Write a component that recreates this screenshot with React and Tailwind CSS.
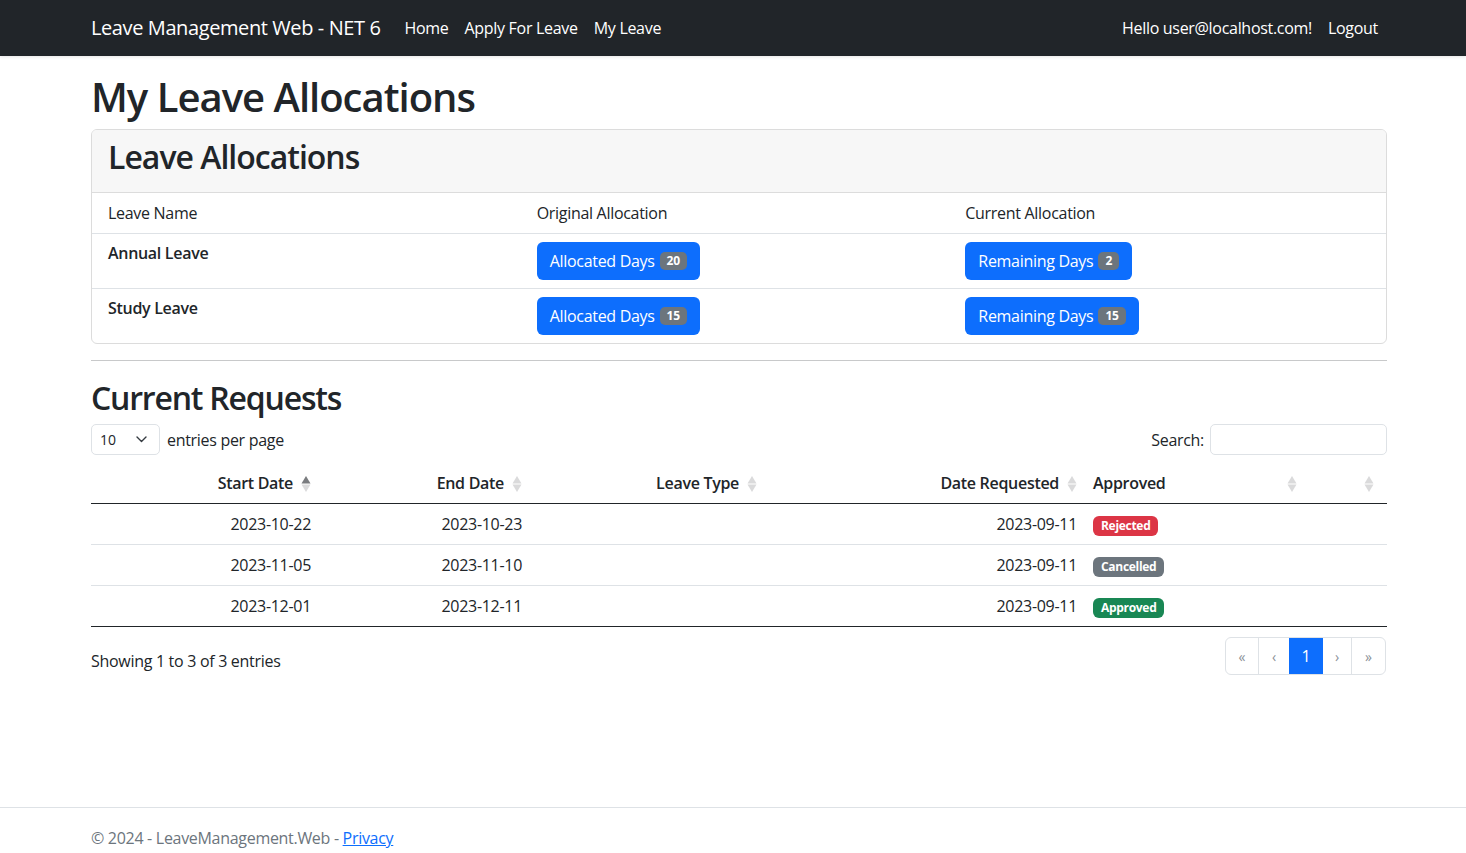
import React from 'react';

const SortIcon = ({ active }) => (
  <svg width="10" height="18" viewBox="0 0 10 18" className="inline-block">
    <path d="M5 1 L9.5 8.5 L0.5 8.5 Z" fill="#212529" fillOpacity={active === 'asc' ? 0.6 : 0.17} />
    <path d="M5 17 L9.5 9.5 L0.5 9.5 Z" fill="#212529" fillOpacity={0.17} />
  </svg>
);

const Badge = ({ children, color }) => (
  <span className={`inline-block rounded-[6px] px-[8px] py-[4px] text-[12px] leading-none font-bold text-white align-middle ${color}`}>
    {children}
  </span>
);

const AllocButton = ({ label, count }) => (
  <button className="inline-flex items-center gap-[5px] rounded-[6px] bg-[#0d6efd] px-[13px] h-[38px] text-[16px] text-white">
    {label}
    <span className="rounded-[5px] bg-[#6c757d] px-[7px] py-[3px] text-[12px] leading-none font-bold">{count}</span>
  </button>
);

const allocations = [
  { name: 'Annual Leave', original: 20, remaining: 2 },
  { name: 'Study Leave', original: 15, remaining: 15 },
];

const requests = [
  { start: '2023-10-22', end: '2023-10-23', requested: '2023-09-11', status: 'Rejected', color: 'bg-[#dc3545]' },
  { start: '2023-11-05', end: '2023-11-10', requested: '2023-09-11', status: 'Cancelled', color: 'bg-[#6c757d]' },
  { start: '2023-12-01', end: '2023-12-11', requested: '2023-09-11', status: 'Approved', color: 'bg-[#198754]' },
];

const App = () => {
  return (
    <div className="h-[853px] overflow-hidden bg-white">
      <div className="flex min-h-[867px] flex-col font-['Open_Sans',sans-serif] text-[16px] text-[#212529]">
        {/* Navbar */}
        <nav className="h-[56px] shrink-0 bg-[#212529] shadow-[0_1px_3px_rgba(0,0,0,0.1)]">
          <div className="ml-[91px] mr-[80px] flex h-full items-center">
            <span className="mr-[16px] text-[20px] text-white tracking-[-0.4px]">Leave Management Web - NET 6</span>
            <div className="flex items-center text-[16px] text-white tracking-[-0.3px]">
              <a className="px-[8px]">Home</a>
              <a className="px-[8px]">Apply For Leave</a>
              <a className="px-[8px]">My Leave</a>
            </div>
            <div className="ml-auto flex items-center text-white tracking-[-0.3px]">
              <span className="px-[8px]">Hello user@localhost.com!</span>
              <a className="px-[8px]">Logout</a>
            </div>
          </div>
        </nav>

        <main className="ml-[91px] w-[1296px] flex-1 pt-[17px]">
          <h1 className="mb-[8px] text-[40px] font-semibold leading-[48px] tracking-[-1px]">My Leave Allocations</h1>

          {/* Card */}
          <div className="overflow-hidden rounded-[6px] border border-[#dcdcdc]">
            <div className="border-b border-[#dcdcdc] bg-[#f7f7f7] px-[16px] py-[8px]">
              <h2 className="mb-[8px] text-[32px] font-semibold leading-[38px] tracking-[-1px]">Leave Allocations</h2>
            </div>
            <div className="grid grid-cols-3 gap-x-[24px] border-b border-[#dee2e6] px-[16px] py-[8px] leading-[24px] tracking-[-0.3px]">
              <div>Leave Name</div>
              <div>Original Allocation</div>
              <div>Current Allocation</div>
            </div>
            {allocations.map((a, i) => (
              <div
                key={a.name}
                className={`grid grid-cols-3 gap-x-[24px] px-[16px] py-[8px] tracking-[-0.3px] ${i < allocations.length - 1 ? 'border-b border-[#dee2e6]' : ''}`}
              >
                <div className="font-semibold leading-[22px]">{a.name}</div>
                <div><AllocButton label="Allocated Days" count={a.original} /></div>
                <div><AllocButton label="Remaining Days" count={a.remaining} /></div>
              </div>
            ))}
          </div>

          <hr className="mt-[16px] mb-[18px] border-t border-[#c8c9ca]" />

          <h2 className="mb-[7px] text-[32px] font-semibold leading-[38px] tracking-[-1.2px]">Current Requests</h2>

          {/* DataTable controls */}
          <div className="flex h-[31px] items-center justify-between">
            <div className="flex items-center gap-[7px]">
              <div className="flex h-[31px] w-[69px] items-center justify-between rounded-[5px] border border-[#dee2e6] pl-[8px] pr-[12px] text-[14px]">
                <span>10</span>
                <svg width="11" height="7" viewBox="0 0 11 7" fill="none">
                  <path d="M1 1 L5.5 5.5 L10 1" stroke="#343a40" strokeWidth="1.4" strokeLinecap="round" strokeLinejoin="round" />
                </svg>
              </div>
              <span className="tracking-[-0.3px]">entries per page</span>
            </div>
            <div className="flex items-center gap-[6px]">
              <span className="tracking-[-0.3px]">Search:</span>
              <div className="h-[31px] w-[177px] rounded-[5px] border border-[#dee2e6]"></div>
            </div>
          </div>

          {/* Table */}
          <table className="mt-[9px] w-full table-fixed border-collapse tracking-[-0.3px]">
            <colgroup>
              <col className="w-[228px]" />
              <col className="w-[211px]" />
              <col className="w-[235px]" />
              <col className="w-[320px]" />
              <col className="w-[225px]" />
              <col className="w-[77px]" />
            </colgroup>
            <thead>
              <tr className="border-b border-[#212529]">
                <th className="py-[8px] pl-[8px] pr-[8px] text-right font-semibold leading-[23px]">
                  <span className="inline-flex items-center gap-[8px]">Start Date <SortIcon active="asc" /></span>
                </th>
                <th className="py-[8px] pl-[8px] pr-[8px] text-right font-semibold leading-[23px]">
                  <span className="inline-flex items-center gap-[8px]">End Date <SortIcon /></span>
                </th>
                <th className="py-[8px] pl-[8px] pr-[8px] text-right font-semibold leading-[23px]">
                  <span className="inline-flex items-center gap-[8px]">Leave Type <SortIcon /></span>
                </th>
                <th className="py-[8px] pl-[8px] pr-[8px] text-right font-semibold leading-[23px]">
                  <span className="inline-flex items-center gap-[8px]">Date Requested <SortIcon /></span>
                </th>
                <th className="py-[8px] pl-[8px] pr-[13px] text-left font-semibold leading-[23px]">
                  <span className="flex items-center justify-between">Approved <SortIcon /></span>
                </th>
                <th className="py-[8px] pl-[8px] pr-[13px] text-right font-semibold leading-[23px]">
                  <span className="flex items-center justify-end"><SortIcon /></span>
                </th>
              </tr>
            </thead>
            <tbody>
              {requests.map((r, i) => (
                <tr key={r.start} className={i < requests.length - 1 ? 'border-b border-[#dee2e6]' : 'border-b border-[#212529]'}>
                  <td className="p-[8px] text-right leading-[24px]">{r.start}</td>
                  <td className="p-[8px] text-right leading-[24px]">{r.end}</td>
                  <td className="p-[8px] text-right leading-[24px]"></td>
                  <td className="p-[8px] text-right leading-[24px]">{r.requested}</td>
                  <td className="p-[8px] text-left leading-[24px]"><Badge color={r.color}>{r.status}</Badge></td>
                  <td className="p-[8px]"></td>
                </tr>
              ))}
            </tbody>
          </table>

          {/* Table footer */}
          <div className="mt-[10px] flex items-start justify-between">
            <div className="pt-[12px] tracking-[-0.3px]">Showing 1 to 3 of 3 entries</div>
            <div className="mr-[1px] flex h-[38px] overflow-hidden rounded-[6px] border border-[#dee2e6] text-[14px] text-[#8a9096]">
              <span className="flex w-[33px] items-center justify-center border-r border-[#dee2e6]">«</span>
              <span className="flex w-[30px] items-center justify-center">‹</span>
              <span className="flex w-[34px] items-center justify-center bg-[#0d6efd] text-[16px] text-white">1</span>
              <span className="flex w-[29px] items-center justify-center border-r border-[#dee2e6]">›</span>
              <span className="flex w-[33px] items-center justify-center">»</span>
            </div>
          </div>
        </main>

        {/* Footer */}
        <footer className="h-[60px] shrink-0 border-t border-[#dee2e6]">
          <div className="ml-[91px] leading-[60px] text-[#6c757d] tracking-[-0.3px]">
            © 2024 - LeaveManagement.Web - <a className="text-[#0d6efd] underline">Privacy</a>
          </div>
        </footer>
      </div>
    </div>
  );
};

export default App;
